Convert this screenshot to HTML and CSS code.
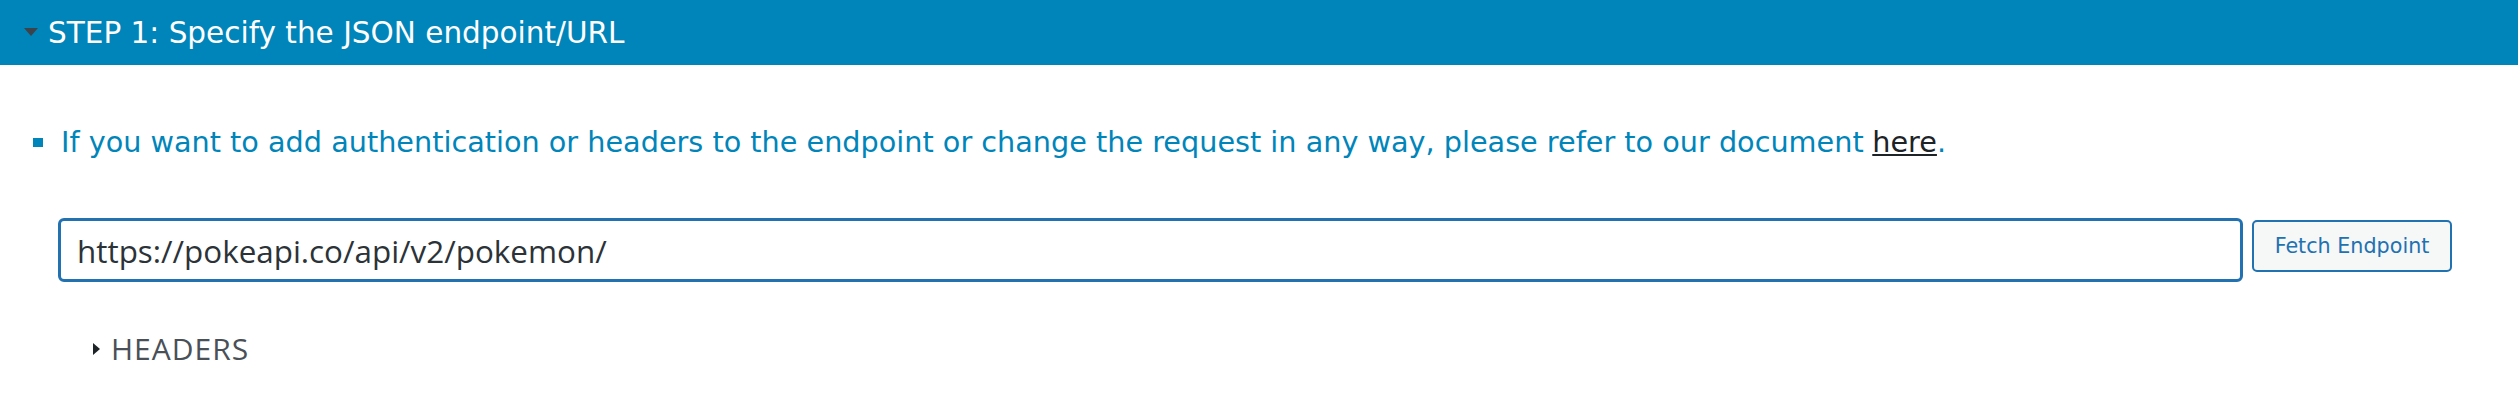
FILE: index.html
```html
<!DOCTYPE html>
<html>
<head>
<meta charset="utf-8">
<link rel="stylesheet" href="styles.css">
</head>
<body>
<div class="panel">
  <div class="panel-head">
    <span class="caret-down"></span>
    <span class="title">STEP 1: Specify the JSON endpoint/URL</span>
  </div>
  <div class="panel-body">
    <ul class="notes">
      <li>If you want to add authentication or headers to the endpoint or change the request in any way, please refer to our document <a href="#">here</a>.</li>
    </ul>
    <div class="url-row">
      <input class="url-input" type="text" value="https://pokeapi.co/api/v2/pokemon/">
      <button class="fetch-btn">Fetch Endpoint</button>
    </div>
    <div class="headers-toggle">
      <span class="caret-right"></span>
      <span class="headers-label">HEADERS</span>
    </div>
  </div>
</div>
</body>
</html>
```

FILE: styles.css
```css
html, body {
  margin: 0;
  padding: 0;
  background: #ffffff;
}

.panel {
  width: 100%;
}

.panel-head {
  height: 65px;
  background: #0085ba;
  display: flex;
  align-items: center;
  padding-left: 24px;
  box-sizing: border-box;
}

.caret-down {
  width: 0;
  height: 0;
  border-left: 7.5px solid transparent;
  border-right: 7.5px solid transparent;
  border-top: 8px solid #3c434a;
  margin-right: 10px;
  margin-top: -2px;
}

.title {
  font-family: "DejaVu Sans", Verdana, sans-serif;
  font-size: 29.5px;
  color: #ffffff;
  line-height: 40px;
}

.panel-body {
  padding: 0;
}

.notes {
  list-style: none;
  margin: 57px 0 0 0;
  padding: 0 0 0 33px;
}

.notes li {
  display: flex;
  align-items: center;
  font-family: "DejaVu Sans", Verdana, sans-serif;
  font-size: 28.7px;
  line-height: 40px;
  color: #0085ba;
  white-space: nowrap;
}

.notes li::before {
  content: "";
  width: 10px;
  height: 9px;
  background: #0085ba;
  margin-right: 18px;
  flex: none;
}

.notes a {
  color: #1d2327;
  text-decoration: underline;
  margin-left: 0.3em;
}

.url-row {
  display: flex;
  align-items: flex-start;
  margin-top: 56px;
  padding: 0 66px 0 58px;
  gap: 9px;
}

.url-input {
  flex: 1;
  height: 64px;
  box-sizing: border-box;
  border: 3px solid #2271b1;
  border-radius: 6px;
  padding: 0 16px;
  font-family: "Open Sans", sans-serif;
  font-size: 31.4px;
  color: #2c3338;
  background: #ffffff;
  outline: none;
}

.fetch-btn {
  width: 200px;
  height: 52px;
  margin-top: 2px;
  box-sizing: border-box;
  border: 2px solid #2271b1;
  border-radius: 5px;
  background: #f6f7f7;
  color: #2271b1;
  font-family: "DejaVu Sans", Verdana, sans-serif;
  font-size: 20.7px;
  padding: 0;
}

.headers-toggle {
  display: flex;
  align-items: center;
  margin-top: 47px;
  padding-left: 93px;
  height: 40px;
}

.caret-right {
  width: 0;
  height: 0;
  border-top: 6.5px solid transparent;
  border-bottom: 6.5px solid transparent;
  border-left: 7px solid #1d2327;
  margin-right: 11px;
}

.headers-label {
  font-family: "Open Sans", sans-serif;
  font-size: 30px;
  letter-spacing: 1px;
  color: #4a5057;
  line-height: 40px;
}
```
